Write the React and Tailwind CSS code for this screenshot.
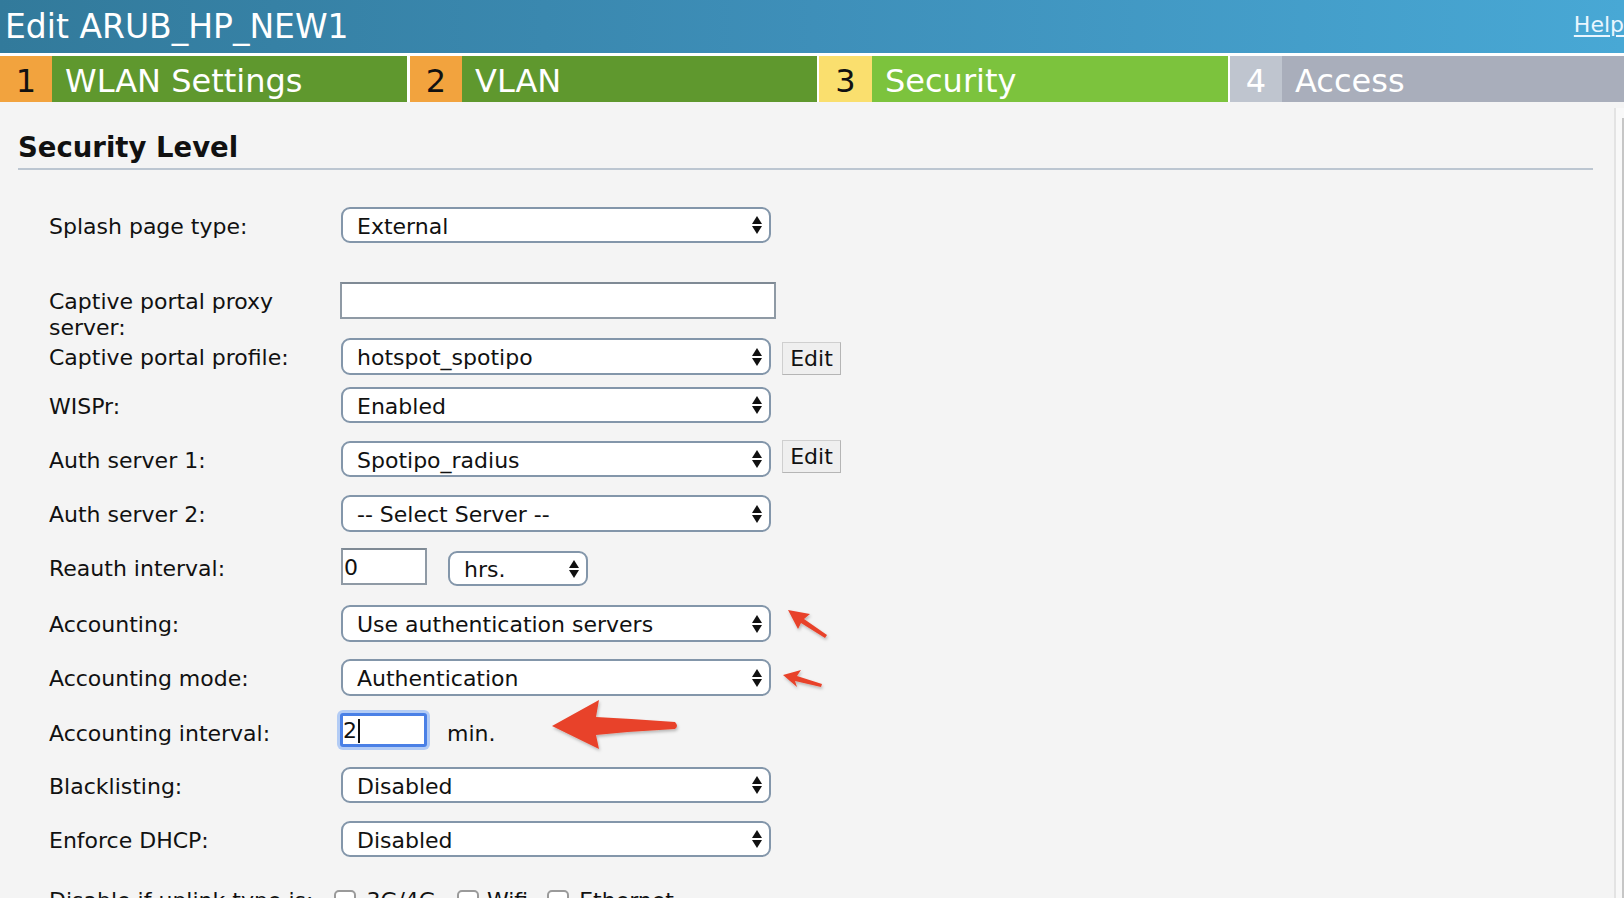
import React from 'react';

const font = { fontFamily: '"DejaVu Sans", Verdana, sans-serif' };

const Arrows = () => (
  <svg width="10" height="18" viewBox="0 0 10 18" className="shrink-0">
    <path d="M0 8 L5 0 L10 8 Z" fill="#111" />
    <path d="M0 10 L10 10 L5 18 Z" fill="#111" />
  </svg>
);

const Select = ({ value, className = 'w-[430px] h-[36px]' }) => (
  <div
    className={`${className} flex items-center justify-between rounded-[9px] border-2 border-[#8396aa] bg-white pl-[14px] pr-[7px] text-[22px] text-[#111] shrink-0`}
  >
    <span className="pt-[2px] whitespace-nowrap">{value}</span>
    <Arrows />
  </div>
);

const EditButton = ({ className = '' }) => (
  <div
    className={`${className} ml-[11px] flex h-[33px] w-[59px] items-center justify-center border border-[#cfcfcf] border-b-[#b5b5b5] border-r-[#b5b5b5] bg-[#efefef] text-[22px] text-[#111]`}
  >
    Edit
  </div>
);

const Label = ({ children, className = 'pt-[7px]' }) => (
  <div className={`w-[292px] shrink-0 text-[22px] leading-[26px] text-[#111] ${className}`}>
    {children}
  </div>
);

const Checkbox = () => (
  <div className="h-[22px] w-[22px] shrink-0 rounded-[5px] border-2 border-[#9a9a9a] bg-white" />
);

export default function App() {
  return (
    <div className="relative h-[898px] w-[1624px] overflow-hidden bg-[#f4f4f4]" style={font}>
      {/* title bar */}
      <div className="flex h-[53px] items-center justify-between bg-linear-to-r from-[#327a9b] via-[#3e8fb9] to-[#48a8d5] pl-[5px]">
        <div className="text-[33px] leading-none text-white whitespace-nowrap">Edit ARUB_HP_NEW1</div>
        <div className="-mt-[4px] text-[22px] leading-none text-[#eaf6ff] underline underline-offset-[3px] whitespace-nowrap">
          Help
        </div>
      </div>

      {/* wizard steps */}
      <div className="flex h-[49px] bg-white pt-[3px] text-[32px] leading-none">
        <div className="flex w-[407px] shrink-0">
          <div className="flex w-[52px] items-center justify-center bg-[#f2a33e] pt-[3px] text-[#111]">1</div>
          <div className="flex flex-1 items-center bg-[#5f982e] pl-[13px] pt-[3px] text-white whitespace-nowrap">WLAN Settings</div>
        </div>
        <div className="ml-[3px] flex w-[407px] shrink-0">
          <div className="flex w-[52px] items-center justify-center bg-[#f2a33e] pt-[3px] text-[#111]">2</div>
          <div className="flex flex-1 items-center bg-[#5f982e] pl-[13px] pt-[3px] text-white">VLAN</div>
        </div>
        <div className="ml-[2px] flex w-[409px] shrink-0">
          <div className="flex w-[53px] items-center justify-center bg-[#fadf6e] pt-[3px] text-[#111]">3</div>
          <div className="flex flex-1 items-center bg-[#7cc33d] pl-[13px] pt-[3px] text-white">Security</div>
        </div>
        <div className="ml-[2px] flex flex-1">
          <div className="flex w-[52px] items-center justify-center bg-[#bfc5cf] pt-[3px] text-white">4</div>
          <div className="flex flex-1 items-center bg-[#a9aebb] pl-[13px] pt-[3px] text-white">Access</div>
        </div>
      </div>

      <div className="flex">
        <div className="flex-1 pl-[18px] pr-[21px] pt-[29px]">
          <h2 className="text-[27.5px] font-bold leading-[32px] text-[#111]">Security Level</h2>
          <div className="mt-[5px] h-[2px] bg-[#bcc6d1]" />

          <div className="mt-[37px] pl-[31px]">
            <div className="flex h-[75px] items-start">
              <Label>Splash page type:</Label>
              <Select value="External" />
            </div>

            <div className="flex h-[56px] items-start">
              <Label>
                Captive portal proxy
                <br />
                server:
              </Label>
              <div className="-ml-[1px] h-[37px] w-[436px] border-2 border-[#8f9aa5] border-t-[#7f8a95] bg-white" />
            </div>

            <div className="flex h-[49px] items-start">
              <Label>Captive portal profile:</Label>
              <Select value="hotspot_spotipo" className="w-[430px] h-[37px]" />
              <EditButton className="mt-[4px]" />
            </div>

            <div className="flex h-[54px] items-start">
              <Label>WISPr:</Label>
              <Select value="Enabled" />
            </div>

            <div className="flex h-[54px] items-start">
              <Label>Auth server 1:</Label>
              <Select value="Spotipo_radius" />
              <EditButton className="-mt-[1px]" />
            </div>

            <div className="flex h-[53px] items-start">
              <Label>Auth server 2:</Label>
              <Select value="-- Select Server --" className="w-[430px] h-[37px]" />
            </div>

            <div className="flex h-[57px] items-start">
              <Label className="pt-[8px]">Reauth interval:</Label>
              <div className="flex h-[37px] w-[86px] items-center border-2 border-[#8f9aa5] border-t-[#7f8a95] bg-white pl-[1px] pt-[2px] text-[22px] text-[#111]">
                0
              </div>
              <Select value="hrs." className="ml-[21px] mt-[3px] w-[140px] h-[35px]" />
            </div>

            <div className="flex h-[54px] items-start">
              <Label>Accounting:</Label>
              <Select value="Use authentication servers" className="w-[430px] h-[37px]" />
            </div>

            <div className="flex h-[54px] items-start">
              <Label>Accounting mode:</Label>
              <Select value="Authentication" className="w-[430px] h-[37px]" />
            </div>

            <div className="flex h-[54px] items-start">
              <Label className="pt-[8px]">Accounting interval:</Label>
              <div className="-ml-[1px] flex h-[34px] w-[87px] items-center rounded-[3px] border-[3px] border-[#4a80e6] bg-white pt-[1px] text-[22px] text-[#111] shadow-[0_0_0_3px_#b3ccf5]">
                2<span className="ml-[1px] inline-block h-[24px] w-[1.5px] bg-[#111]" />
              </div>
              <div className="ml-[20px] pt-[8px] text-[22px] leading-[26px] text-[#111]">min.</div>
            </div>

            <div className="flex h-[54px] items-start">
              <Label>Blacklisting:</Label>
              <Select value="Disabled" />
            </div>

            <div className="flex h-[57px] items-start">
              <Label>Enforce DHCP:</Label>
              <Select value="Disabled" />
            </div>

            <div className="flex h-[36px] items-center pt-[9px] text-[22px] leading-[26px] text-[#111] whitespace-nowrap">
              <span>Disable if uplink type is:</span>
              <div className="ml-[21px]"><Checkbox /></div>
              <span className="ml-[10px]">3G/4G</span>
              <div className="ml-[21px]"><Checkbox /></div>
              <span className="ml-[8px]">Wifi</span>
              <div className="ml-[19px]"><Checkbox /></div>
              <span className="ml-[10px]">Ethernet</span>
            </div>
          </div>
        </div>

        {/* right panel edge */}
        <div className="mt-[6px] flex w-[10px] shrink-0 border-l-2 border-[#e3e3e3] bg-[#f8f8f8]">
          <div className="mt-[10px] ml-auto h-[900px] w-[2px] bg-[#c6c6c6]" />
        </div>
      </div>

      {/* annotation arrows */}
      <svg
        className="pointer-events-none absolute left-0 top-0"
        width="1624"
        height="898"
        viewBox="0 0 1624 898"
      >
        <defs>
          <filter id="sh" x="-20%" y="-20%" width="140%" height="140%">
            <feDropShadow dx="1" dy="2" stdDeviation="1.5" floodColor="#000" floodOpacity="0.25" />
          </filter>
        </defs>
        <g fill="#e8432a" filter="url(#sh)">
          <path d="M788 610 L810 614 L804 619 L827 635 L825 638 L801 623 L798 629 Z" />
          <path d="M783 675 L801 670 L797 676 L822 684 L821 687 L795 681 L797 687 Z" />
          <path d="M552 726 L599 700 L596 717 Q636 719 675 722 Q679 726 675 729 Q636 731 596 735 L599 749 Z" />
        </g>
      </svg>
    </div>
  );
}
